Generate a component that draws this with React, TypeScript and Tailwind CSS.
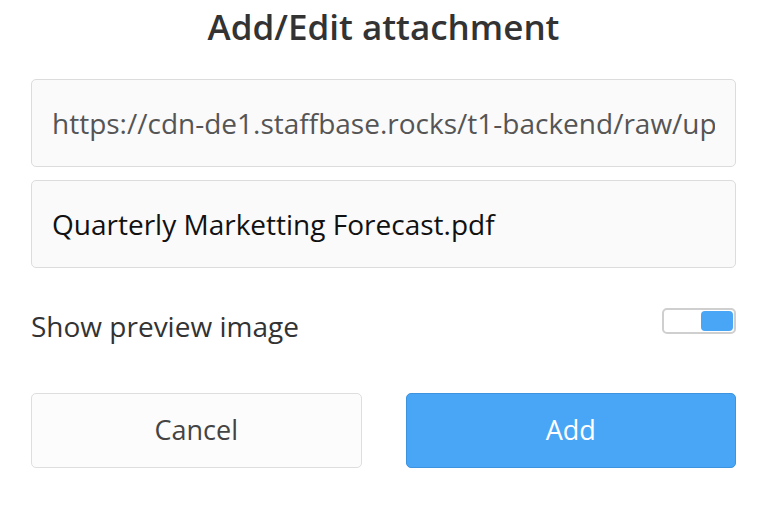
import React from "react";

const App: React.FC = () => {
  const [preview, setPreview] = React.useState(true);

  return (
    <div
      className="w-[780px] h-[510px] bg-white px-[31px] pr-[44px] overflow-hidden"
      style={{ fontFamily: "'Open Sans', sans-serif" }}
    >
      <h1 className="text-center text-[35px] leading-[52px] font-semibold text-[#333] pt-[1px]">
        Add/Edit attachment
      </h1>
      <div className="mt-[26px] flex flex-col gap-[13px]">
        <input
          readOnly
          value="https://cdn-de1.staffbase.rocks/t1-backend/raw/upload/v1587651234/quarterly-marketting-forecast.pdf"
          className="h-[88px] w-full rounded-[5px] border border-[#dcdcdc] bg-[#fafafa] px-[20px] text-[28px] text-[#555] outline-none"
        />
        <input
          readOnly
          value="Quarterly Marketting Forecast.pdf"
          className="h-[88px] w-full rounded-[5px] border border-[#dcdcdc] bg-[#fafafa] px-[20px] text-[28px] text-[#111] outline-none"
        />
      </div>
      <div className="mt-[37px] flex items-start justify-between">
        <span className="text-[28px] leading-[42px] text-[#333]">Show preview image</span>
        <button
          onClick={() => setPreview(!preview)}
          className={`mt-[3px] flex h-[26px] w-[74px] items-center rounded-[5px] border-2 border-[#cfcfcf] bg-white p-[1px] ${
            preview ? "justify-end" : "justify-start"
          }`}
        >
          <span
            className={`h-[20px] w-[32px] rounded-[4px] ${preview ? "bg-[#49a5f5]" : "bg-[#cfcfcf]"}`}
          />
        </button>
      </div>
      <div className="mt-[46px] flex gap-[44px]">
        <button className="h-[75px] flex-1 rounded-[5px] border border-[#dedede] bg-[#fcfcfc] text-[27px] text-[#444]">
          Cancel
        </button>
        <button className="h-[75px] flex-1 rounded-[5px] border border-[#3d93de] bg-[#49a6f6] text-[27px] text-white">
          Add
        </button>
      </div>
    </div>
  );
};

export default App;
